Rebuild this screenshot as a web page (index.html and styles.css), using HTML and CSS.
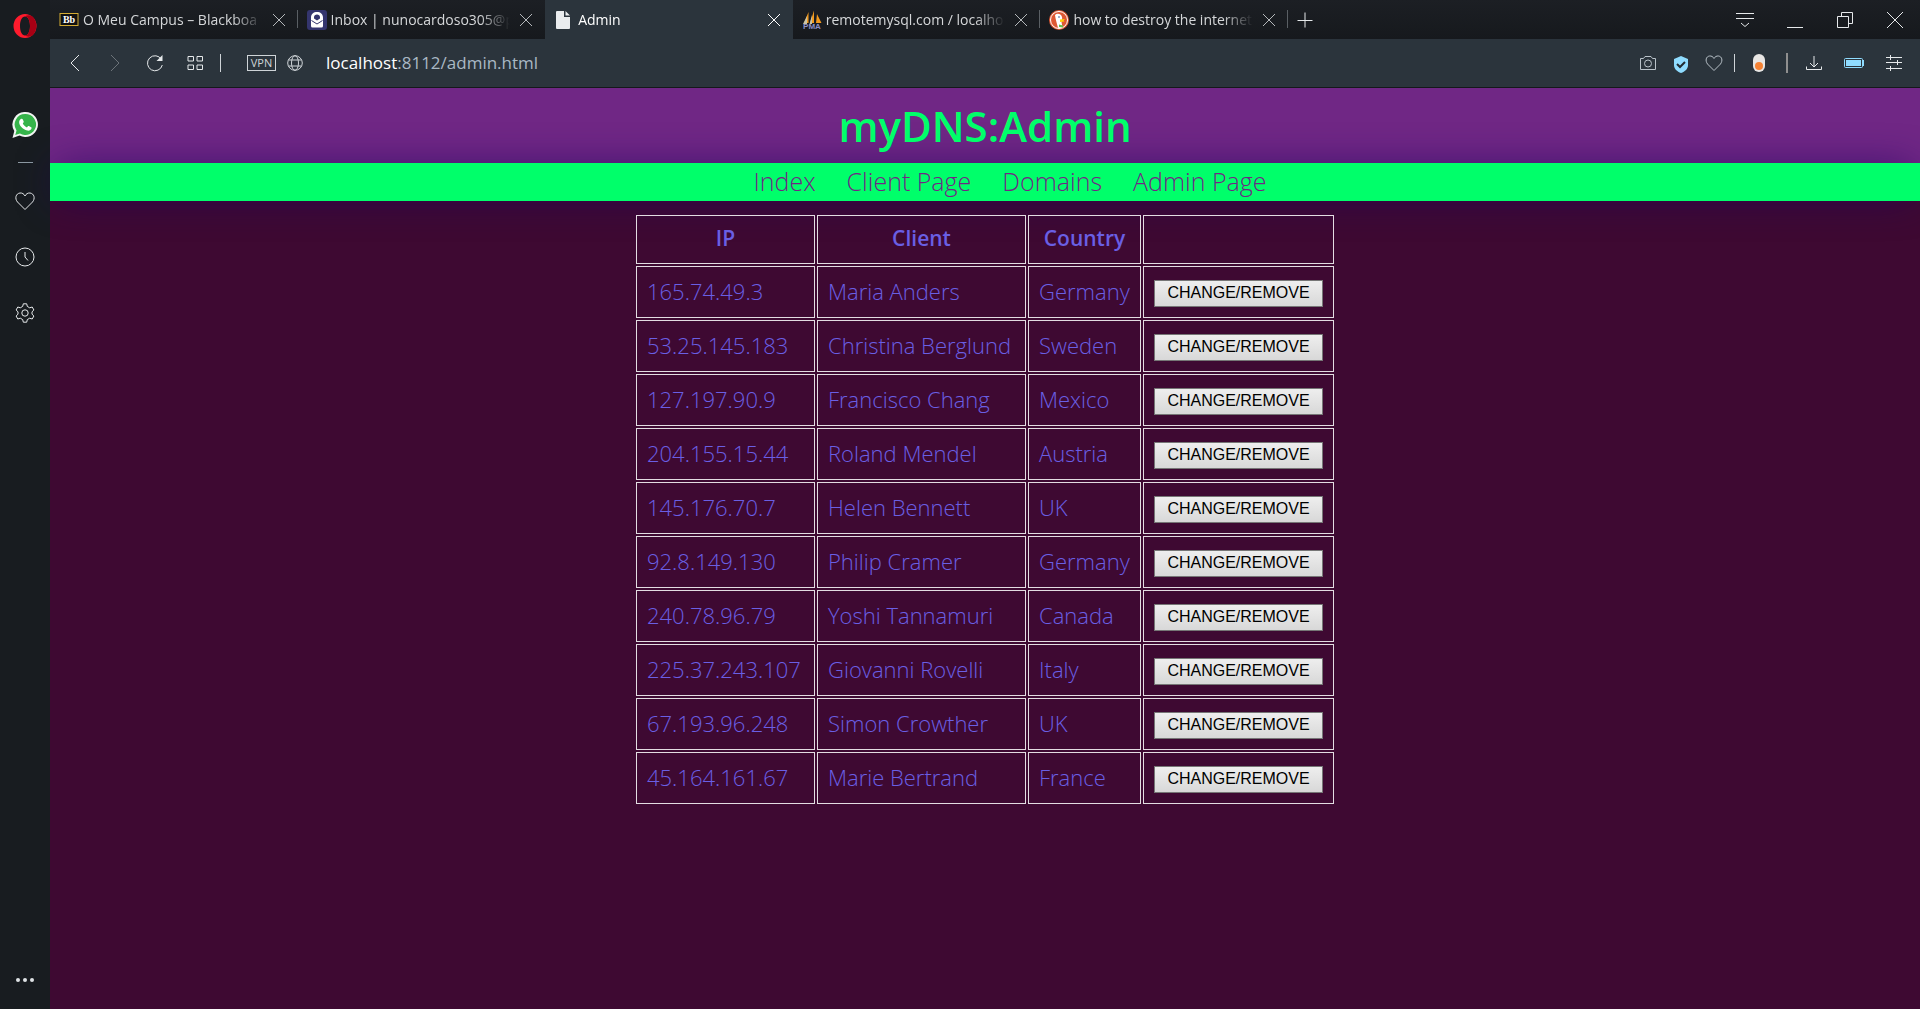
FILE: index.html
```html
<!DOCTYPE html>
<html lang="en">
<head>
<meta charset="utf-8">
<title>Admin</title>
<link rel="stylesheet" href="styles.css">
</head>
<body>
<div class="window">
  <aside class="sidebar">
    <button class="side-btn side-opera" aria-label="Opera menu"><svg width="26" height="26" viewBox="0 0 26 26"><path fill="#ff1b2d" fill-rule="evenodd" d="M13 1a11.500 12 0 1 0 0 24a11.500 12 0 1 0 0-24zM13 3.500c3 0 5 4 5 9.500s-2 9.500-5 9.500s-5-4-5-9.500s2-9.500 5-9.500z"/><path fill="#a70014" d="M13 3.500c2-1.500 5-1.600 7.500 0c5 4.500 5 14.500 0 19c-2.500 1.600-5.500 1.500-7.500 0c3 0 5-4 5-9.500s-2-9.500-5-9.500z"/></svg></button>
    <button class="side-btn side-chat" aria-label="WhatsApp"><svg width="26" height="26" viewBox="0 0 26 26"><path fill="#f2f4f2" d="M13.500 0a12.500 12.500 0 1 1-6 23.500L.5 26l1.800-7A12.500 12.500 0 0 1 13.500 0z"/><path fill="#35b44a" d="M13.500 2a10.500 10.500 0 1 1-5.500 19.400L3.300 23l1.200-4.600A10.500 10.500 0 0 1 13.500 2z"/><path fill="#fff" d="M9 7c.8-.4 1.500-.2 1.800.5l.9 2.100c.2.600-.1 1-.9 1.900c.9 1.900 2.300 3.100 4.200 3.900c.9-1.100 1.300-1.600 1.900-1.300l2.200 1.100c.6.300.6.700.3 1.600c-.6 1.500-2.400 2.200-4.200 1.700c-4.300-1.200-7.300-4.300-8-7.600c-.2-1.800.5-3.300 1.800-3.900z"/></svg></button>
    <hr class="side-rule">
    <button class="side-btn side-item" aria-label="Favourites"><svg width="22" height="22" viewBox="0 0 22 22"><path class="line" d="M11 19.500L3.500 12C.5 8.500 1.800 3.500 6 3c2.200-.2 4 .9 5 3c1-2.100 2.800-3.200 5-3c4.200.5 5.500 5.500 2.500 9z"/></svg></button>
    <button class="side-btn side-item" aria-label="History"><svg width="22" height="22" viewBox="0 0 22 22"><circle class="line" cx="11" cy="11" r="9"/><path class="line" d="M11 6v5l3 3.500"/></svg></button>
    <button class="side-btn side-item" aria-label="Settings"><svg width="22" height="22" viewBox="0 0 22 22"><path class="line" d="M9.300 1.800h3.400l.6 2.600l2.400 1.400l2.500-.8l1.700 3l-1.900 1.800v2.400l1.900 1.800l-1.700 3l-2.500-.8l-2.400 1.400l-.6 2.600H9.300l-.6-2.600l-2.400-1.400l-2.500.8l-1.700-3L4 12.200V9.800L2.100 8l1.700-3l2.500.8l2.400-1.400z"/><circle class="line" cx="11" cy="11" r="3.200"/></svg></button>
    <button class="side-btn side-more" aria-label="More"><svg width="20" height="6" viewBox="0 0 20 6"><g fill="#dfe3e5"><circle cx="3" cy="3" r="2"/><circle cx="10" cy="3" r="2"/><circle cx="17" cy="3" r="2"/></g></svg></button>
  </aside>
  <div class="main">
    <div class="tabstrip">
      <div class="tabs">
        <div class="tab">
          <svg width="20" height="20" viewBox="0 0 20 20"><rect x="1" y="3.500" width="18" height="12" fill="#111" stroke="#d4ab32"/><text x="10" y="13" class="favicon-text" text-anchor="middle">Bb</text></svg>
          <span class="tab-title">O Meu Campus – Blackboa</span>
          <button class="tab-close" aria-label="Close tab"><svg width="14" height="14" viewBox="0 0 14 14"><path class="line" d="M1 1l12 12M13 1L1 13"/></svg></button>
        </div>
        <div class="tab">
          <svg width="20" height="20" viewBox="0 0 20 20"><rect width="20" height="20" rx="3" fill="#34356e"/><path fill="#fff" fill-rule="evenodd" d="M4 9V7.500C4 4 6.600 2 10 2s6 2 6 5.500V16a1.500 1.500 0 0 1-1.500 1.500h-9A1.500 1.500 0 0 1 4 16zM7 8.500L10 10.500l3-2V7.300C13 5.500 11.700 4.500 10 4.500S7 5.500 7 7.300z"/><path fill="none" stroke="#34356e" d="M4.500 10.500L10 14l5.500-3.500"/></svg>
          <span class="tab-title">Inbox | nunocardoso305@p</span>
          <button class="tab-close" aria-label="Close tab"><svg width="14" height="14" viewBox="0 0 14 14"><path class="line" d="M1 1l12 12M13 1L1 13"/></svg></button>
        </div>
        <div class="tab tab-active">
          <svg width="20" height="20" viewBox="0 0 20 20"><path fill="#e9ecee" d="M3 1h7v6h6v11a1 1 0 0 1-1 1H3a1 1 0 0 1-1-1V2a1 1 0 0 1 1-1zM11.500 1L16 5.500h-4.500z"/></svg>
          <span class="tab-title">Admin</span>
          <button class="tab-close" aria-label="Close tab"><svg width="14" height="14" viewBox="0 0 14 14"><path class="line" d="M1 1l12 12M13 1L1 13"/></svg></button>
        </div>
        <div class="tab">
          <svg width="20" height="20" viewBox="0 0 20 20"><path fill="#f39a1e" d="M2 13L6.500 2v11zM8 13l4-12.500V13zM14 13l1-9l4.500 9z"/><path fill="#c9c4a8" d="M1 14l4-8v8zM7.500 14L10 5v9z"/><text x="10" y="19" class="favicon-pma" text-anchor="middle">PMA</text></svg>
          <span class="tab-title">remotemysql.com / localho</span>
          <button class="tab-close" aria-label="Close tab"><svg width="14" height="14" viewBox="0 0 14 14"><path class="line" d="M1 1l12 12M13 1L1 13"/></svg></button>
        </div>
        <div class="tab">
          <svg width="20" height="20" viewBox="0 0 20 20"><circle cx="10" cy="10" r="10" fill="#de5833"/><circle cx="10" cy="10" r="8.500" fill="none" stroke="#fff"/><path fill="#fff" d="M6 5c2-2 6-1.500 7 2c.6 2-.5 3-.5 5l1 5.500c-1.500.7-3.500.7-4.500.2C8 14 6.500 9 6 5z"/><path fill="#fdd20a" d="M11 9.500l5-.5l-1.500 1.500l1 1L11 12z"/><path fill="#65bc46" d="M10 14.500l4 1v2l-4-.5z"/><circle cx="10" cy="7" r=".8" fill="#2d4f8e"/></svg>
          <span class="tab-title">how to destroy the internet</span>
          <button class="tab-close" aria-label="Close tab"><svg width="14" height="14" viewBox="0 0 14 14"><path class="line" d="M1 1l12 12M13 1L1 13"/></svg></button>
        </div>
      </div>
      <button class="tab-new" aria-label="New tab"><svg width="16" height="16" viewBox="0 0 16 16"><path class="line" d="M8 .500v15M.5 8.500h15"/></svg></button>
      <div class="window-controls">
        <button aria-label="Tab menu"><svg width="18" height="18" viewBox="0 0 18 18"><path class="line" d="M0 2.500h18M0 7.500h18M5 12l4 3.500l4-3.500"/></svg></button>
        <button aria-label="Minimise"><svg width="18" height="18" viewBox="0 0 18 18"><path class="line" d="M1 16.500h16"/></svg></button>
        <button aria-label="Restore"><svg width="18" height="18" viewBox="0 0 18 18"><path class="line" d="M1.500 5.500h11v11h-11zM5.500 5V1.500h11v11H13"/></svg></button>
        <button aria-label="Close"><svg width="18" height="18" viewBox="0 0 18 18"><path class="line" d="M1 1l16 16M17 1L1 17"/></svg></button>
      </div>
    </div>
    <div class="toolbar">
      <div class="nav-buttons">
        <button aria-label="Back"><svg width="18" height="18" viewBox="0 0 18 18"><path class="line" d="M13 1L5 9l8 8"/></svg></button>
        <button class="dim" aria-label="Forward"><svg width="18" height="18" viewBox="0 0 18 18"><path class="line" d="M5 1l8 8l-8 8"/></svg></button>
        <button aria-label="Reload"><svg width="18" height="18" viewBox="0 0 18 18"><path class="line" d="M15.500 5.500A7.500 7.500 0 1 0 16.300 11"/><path fill="#e6e9eb" d="M16.500 1v6h-6z"/></svg></button>
        <button aria-label="Speed dial"><svg width="18" height="18" viewBox="0 0 18 18"><path class="line" d="M2 2.500h5.500v4.500H2zM11 2.500h5.500v4.500H11zM2 11h5.500v4.500H2zM11 11h5.500v4.500H11z"/></svg></button>
      </div>
      <span class="divider"></span>
      <button class="vpn">VPN</button>
      <svg class="globe" width="16" height="16" viewBox="0 0 16 16"><circle class="line" cx="8" cy="8" r="7.300"/><ellipse class="line" cx="8" cy="8" rx="3.500" ry="7.300"/><path class="line" d="M1.500 5h13M1.500 11h13"/></svg>
      <div class="address"><span class="host">localhost</span>:8112/admin.html</div>
      <div class="page-actions">
        <button aria-label="Snapshot"><svg width="24" height="24" viewBox="0 0 24 24"><path class="line soft" d="M4.500 7.500h3l1.500-2h6l1.500 2h3v11h-15z"/><circle class="line soft" cx="12" cy="12.500" r="3.500"/></svg></button>
        <button aria-label="Ad blocker"><svg width="24" height="24" viewBox="0 0 24 24"><path fill="#8fdcff" d="M12 5l7 3v6c0 4-3 6.500-7 8c-4-1.500-7-4-7-8V8z"/><path fill="none" stroke="#222b32" stroke-width="2" d="M8 13l3 3l5-5"/></svg></button>
        <button aria-label="Add to favourites"><svg width="24" height="24" viewBox="0 0 24 24"><path class="line soft" d="M12 19.500L5.500 13C3 9.500 4 5.500 7.500 5c2-.2 3.500.7 4.500 2.500C13 5.700 14.500 4.800 16.500 5c3.500.5 4.500 4.500 2 8z"/></svg></button>
      </div>
      <span class="divider"></span>
      <button class="extension" aria-label="Extension"><svg width="24" height="24" viewBox="0 0 24 24"><rect x="6" y="3" width="12" height="18" rx="6" fill="#e8e6e4"/><circle cx="12" cy="15" r="4" fill="#f58234"/></svg></button>
      <span class="divider divider-wide"></span>
      <div class="browser-actions">
        <button aria-label="Downloads"><svg width="24" height="24" viewBox="0 0 24 24"><path class="line" d="M12 5v11M8 12l4 4l4-4M4.500 15.500v3h15v-3"/></svg></button>
        <button aria-label="Battery saver"><svg width="24" height="24" viewBox="0 0 24 24"><rect x="2.500" y="7.500" width="18" height="9" rx="1" fill="none" stroke="#8fdcff"/><path fill="#8fdcff" d="M4 9h15v6H4zM21 9h1v6h-1z"/></svg></button>
        <button aria-label="Easy setup"><svg width="24" height="24" viewBox="0 0 24 24"><path class="line" d="M4 6.500h16M4 11.500h16M4 17.500h16M8.500 4v5M15.500 9v5M8.500 15v5"/></svg></button>
      </div>
    </div>
    <div class="page">
      <header class="page-header"><h1>myDNS:Admin</h1></header>
      <nav class="page-nav">
        <a href="#index">Index</a>
        <a href="#client">Client Page</a>
        <a href="#domains">Domains</a>
        <a href="#admin">Admin Page</a>
      </nav>
      <table class="clients">
        <colgroup><col class="col-ip"><col class="col-client"><col class="col-country"><col class="col-action"></colgroup>
        <thead><tr><th>IP</th><th>Client</th><th>Country</th><th></th></tr></thead>
        <tbody>
          <tr><td>165.74.49.3</td><td>Maria Anders</td><td>Germany</td><td><button>CHANGE/REMOVE</button></td></tr>
          <tr><td>53.25.145.183</td><td>Christina Berglund</td><td>Sweden</td><td><button>CHANGE/REMOVE</button></td></tr>
          <tr><td>127.197.90.9</td><td>Francisco Chang</td><td>Mexico</td><td><button>CHANGE/REMOVE</button></td></tr>
          <tr><td>204.155.15.44</td><td>Roland Mendel</td><td>Austria</td><td><button>CHANGE/REMOVE</button></td></tr>
          <tr><td>145.176.70.7</td><td>Helen Bennett</td><td>UK</td><td><button>CHANGE/REMOVE</button></td></tr>
          <tr><td>92.8.149.130</td><td>Philip Cramer</td><td>Germany</td><td><button>CHANGE/REMOVE</button></td></tr>
          <tr><td>240.78.96.79</td><td>Yoshi Tannamuri</td><td>Canada</td><td><button>CHANGE/REMOVE</button></td></tr>
          <tr><td>225.37.243.107</td><td>Giovanni Rovelli</td><td>Italy</td><td><button>CHANGE/REMOVE</button></td></tr>
          <tr><td>67.193.96.248</td><td>Simon Crowther</td><td>UK</td><td><button>CHANGE/REMOVE</button></td></tr>
          <tr><td>45.164.161.67</td><td>Marie Bertrand</td><td>France</td><td><button>CHANGE/REMOVE</button></td></tr>
        </tbody>
      </table>
    </div>
  </div>
</div>
</body>
</html>
```
FILE: styles.css
```css
* {
  box-sizing: border-box;
}

body {
  margin: 0;
  font-family: "Open Sans", "Noto Sans", sans-serif;
}

button {
  margin: 0;
  padding: 0;
  border: 0;
  background: none;
  color: inherit;
}

svg {
  display: block;
  flex: none;
}

.line {
  fill: none;
  stroke: #e6e9eb;
}

.soft {
  stroke: #b9c2c9;
}

.window {
  display: flex;
  min-height: 100vh;
}

/* Sidebar */
.sidebar {
  display: flex;
  flex: none;
  flex-direction: column;
  align-items: center;
  width: 50px;
  padding: 13px 0 26px;
  background: #181c20;
}

.side-chat {
  margin-top: 73px;
}

.side-rule {
  width: 15px;
  height: 1px;
  margin: 24px 0 0;
  border: 0;
  background: #8d99a2;
}

.side-item {
  margin-top: 34px;
}

.side-rule + .side-item {
  margin-top: 27px;
}

.side-more {
  margin-top: auto;
}

/* Tab strip */
.main {
  display: flex;
  flex: 1;
  flex-direction: column;
  min-width: 0;
}

.tabstrip {
  display: flex;
  align-items: stretch;
  height: 39px;
  background: linear-gradient(#1c1f24, #16191d);
}

.tabs {
  display: flex;
  flex: 0 1 1238px;
  min-width: 0;
}

.tab {
  display: flex;
  flex: 1;
  align-items: center;
  min-width: 0;
  padding: 0 12px 0 9px;
  background: linear-gradient(#5a5f64, #5a5f64) right 10px / 1px 18px no-repeat;
  color: #d5d7d9;
}

.tab:has(+ .tab-active) {
  background: none;
}

.tab-active {
  background: #2b343c;
  color: #fff;
}

.tab-title {
  flex: 1;
  margin-left: 4px;
  overflow: hidden;
  font-size: 14px;
  line-height: 20px;
  white-space: nowrap;
  mask-image: linear-gradient(to left, transparent, #000 30px);
}

.tab-close {
  margin-left: 9px;
}

.tab .tab-close .line {
  stroke: #b4b8bb;
}

.tab-active .tab-close .line {
  stroke: #fff;
}

.favicon-text {
  fill: #fff;
  font: bold 10px "Liberation Serif", serif;
}

.favicon-pma {
  fill: #8d90c8;
  font: bold 8px "Liberation Sans", sans-serif;
}

.tab-new {
  margin-left: 9px;
}

.window-controls {
  display: flex;
  gap: 32px;
  align-items: center;
  margin-left: auto;
  padding-right: 16px;
}

/* Toolbar */
.toolbar {
  display: flex;
  align-items: center;
  height: 49px;
  padding: 0 14px 0 5px;
  border-bottom: 1px solid #14181b;
  background: #2b343c;
}

.nav-buttons {
  display: flex;
}

.nav-buttons button {
  display: flex;
  justify-content: center;
  width: 40px;
}

.dim {
  opacity: 0.35;
}

.divider {
  width: 1px;
  height: 18px;
  margin: 0 12px 0 8px;
  background: #cfd4d8;
}

.divider-wide {
  width: 2px;
  height: 20px;
  margin: 0 14px 0 15px;
  background: #8f8f8f;
}

.nav-buttons + .divider {
  margin: 0 26px 0 5px;
}

.vpn {
  width: 29px;
  height: 16px;
  border: 1px solid #cfd4d8;
  color: #cfd4d8;
  font: 11px/14px "Open Sans", sans-serif;
}

.globe {
  margin-left: 11px;
}

.globe .line {
  stroke: #cfd4d8;
}

.address {
  margin-left: 23px;
  color: #a9b8c4;
  font-size: 17px;
  line-height: 24px;
}

.host {
  color: #fff;
}

.page-actions {
  display: flex;
  gap: 9px;
  margin-left: auto;
}

.browser-actions {
  display: flex;
  gap: 16px;
}

/* Page */
.page {
  flex: 1;
  background: #3e0932;
  color: #6a5fe4;
  font-family: "Open Sans", "Noto Sans", sans-serif;
  font-weight: 300;
}

.page-header {
  height: 75px;
  background: #702785;
  text-align: center;
}

.page-header h1 {
  margin: 0;
  color: #00ff6a;
  font-size: 42px;
  font-weight: 600;
  line-height: 76px;
}

.page-nav {
  display: flex;
  gap: 31px;
  justify-content: center;
  padding-left: 50px;
  background: #00ff6a;
  box-shadow: 0 0 40px -8px #1f0560;
  font-size: 25px;
  line-height: 36px;
  padding-bottom: 2px;
}

.page-nav a {
  color: #702785;
  text-decoration: none;
}

.clients {
  width: 702px;
  margin: 12px auto 0;
  border-spacing: 2px;
  font-size: 22px;
  line-height: 30px;
  table-layout: fixed;
}

.col-ip {
  width: 179px;
}

.col-client {
  width: 209px;
}

.col-country {
  width: 113px;
}

.clients th,
.clients td {
  height: 52px;
  padding: 0 10px 3px;
  border: 1px solid #e3dce2;
  text-align: left;
  white-space: nowrap;
}

.clients td:last-child {
  padding: 2px 10px 0;
}

.clients th {
  height: 49px;
  font-size: 21px;
  font-weight: 600;
  text-align: center;
}

.clients button {
  display: block;
  width: 100%;
  height: 27px;
  border: 1px solid #767676;
  background: linear-gradient(#eee, #d8d8d8);
  color: #000;
  font: 16px "Liberation Sans", sans-serif;
}
```
